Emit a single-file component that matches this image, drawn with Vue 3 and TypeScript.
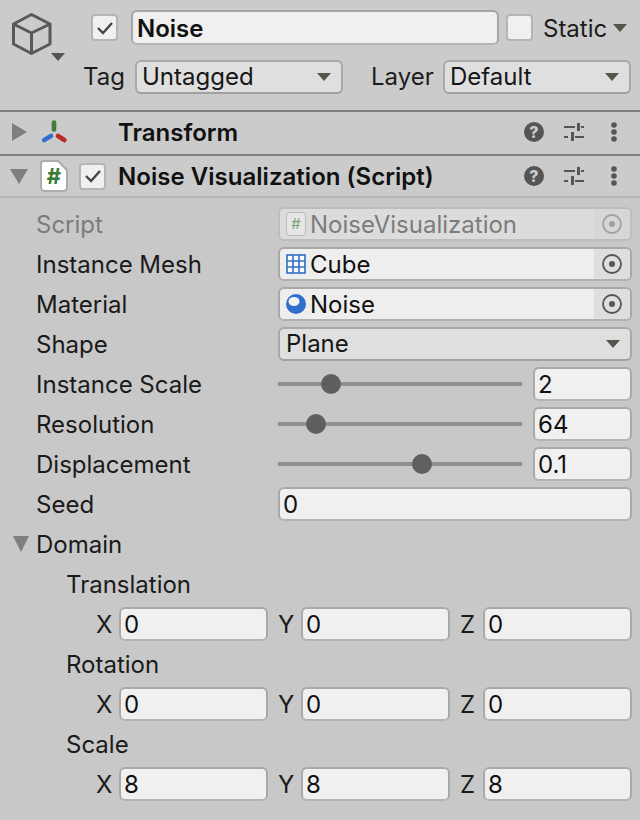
<script setup lang="ts">
const objectFields = [
  { label: "Script", value: "NoiseVisualization", icon: "script", disabled: true },
  { label: "Instance Mesh", value: "Cube", icon: "mesh", disabled: false },
  { label: "Material", value: "Noise", icon: "material", disabled: false },
];

const sliders = [
  { label: "Instance Scale", value: "2", pos: 53 },
  { label: "Resolution", value: "64", pos: 38 },
  { label: "Displacement", value: "0.1", pos: 144 },
];

const vectors = [
  { label: "Translation", values: ["0", "0", "0"] },
  { label: "Rotation", values: ["0", "0", "0"] },
  { label: "Scale", values: ["8", "8", "8"] },
];

const axes = ["X", "Y", "Z"];
</script>

<template>
  <div class="inspector">
    <div class="object-header">
      <div class="object-icon">
        <svg width="40" height="42" viewBox="0 0 40 42" fill="none" stroke="#595959" stroke-width="3" stroke-linejoin="round">
          <path d="M19.5 1.5 L38 11 V31 L19.5 40.5 L1.5 31 V11 Z" />
          <path d="M1.5 11 L19.5 20 L38 11 M19.5 20 V40.5" />
        </svg>
        <span class="arrow-down object-arrow"></span>
      </div>
      <div class="object-rows">
        <div class="name-row">
          <span class="check main-check">
            <svg width="18" height="14" viewBox="0 0 18 14" fill="none" stroke="#444" stroke-width="2.4"><path d="M2 7 L7 12 L16 2" /></svg>
          </span>
          <div class="name-input">Noise</div>
          <span class="check static-check"></span>
          <span class="static-label">Static</span>
          <span class="arrow-down"></span>
        </div>
        <div class="tag-row">
          <span class="tag-label">Tag</span>
          <div class="dropdown tag-drop">Untagged<span class="arrow-down"></span></div>
          <span class="layer-label">Layer</span>
          <div class="dropdown layer-drop">Default<span class="arrow-down"></span></div>
        </div>
      </div>
    </div>

    <div class="comp-header transform">
      <span class="fold-right"></span>
      <svg class="transform-icon" width="28" height="26" viewBox="0 0 28 26" fill="none" stroke-width="4.6" stroke-linecap="round">
        <path d="M14 2.5 V9.5" stroke="#3f7f3a" />
        <path d="M4.2 20 L11 16" stroke="#2f70cc" />
        <path d="M18 16 L24.4 20" stroke="#b82a22" />
      </svg>
      <span class="comp-title">Transform</span>
      <div class="comp-tools">
        <span class="help">?</span>
        <svg class="sliders" width="20" height="20" viewBox="0 0 20 20" fill="none" stroke="#555" stroke-width="2">
          <path d="M0 5 H11 M17 5 H20 M0 15 H4 M11 15 H20" />
          <path d="M14.5 1 V9 M8.5 10 V19" stroke-width="3" />
        </svg>
        <svg class="dots" width="6" height="20" viewBox="0 0 6 20" fill="#555"><circle cx="3" cy="3" r="2.8" /><circle cx="3" cy="10" r="2.8" /><circle cx="3" cy="17" r="2.8" /></svg>
      </div>
    </div>

    <div class="comp-header script-header">
      <span class="fold-down"></span>
      <svg class="script-icon" width="28" height="32" viewBox="0 0 28 32">
        <path d="M4 1 H18 L27 10 V27 Q27 31 23 31 H5 Q1 31 1 27 V4 Q1 1 4 1 Z" fill="#fff" stroke="#acacac" stroke-width="2" />
        <text x="14" y="24" text-anchor="middle" font-size="22" font-weight="700" fill="#3b7a35">#</text>
      </svg>
      <span class="check comp-check">
        <svg width="18" height="14" viewBox="0 0 18 14" fill="none" stroke="#444" stroke-width="2.4"><path d="M2 7 L7 12 L16 2" /></svg>
      </span>
      <span class="comp-title">Noise Visualization (Script)</span>
      <div class="comp-tools">
        <span class="help">?</span>
        <svg class="sliders" width="20" height="20" viewBox="0 0 20 20" fill="none" stroke="#555" stroke-width="2">
          <path d="M0 5 H11 M17 5 H20 M0 15 H4 M11 15 H20" />
          <path d="M14.5 1 V9 M8.5 10 V19" stroke-width="3" />
        </svg>
        <svg class="dots" width="6" height="20" viewBox="0 0 6 20" fill="#555"><circle cx="3" cy="3" r="2.8" /><circle cx="3" cy="10" r="2.8" /><circle cx="3" cy="17" r="2.8" /></svg>
      </div>
    </div>

    <div class="props">
      <div v-for="f in objectFields" :key="f.label" class="row" :class="{ disabled: f.disabled }">
        <span class="label">{{ f.label }}</span>
        <div class="object-field">
          <span class="object-value">
            <span v-if="f.icon === 'script'" class="mini-script">#</span>
            <svg v-else-if="f.icon === 'mesh'" width="20" height="20" viewBox="0 0 20 20" fill="#fff" stroke="#2f6fc4" stroke-width="1.6">
              <rect x="1" y="1" width="18" height="18" />
              <path d="M7 1 V19 M13 1 V19 M1 7 H19 M1 13 H19" />
            </svg>
            <svg v-else width="20" height="20" viewBox="0 0 20 20">
              <circle cx="10" cy="10" r="10" fill="#2f70cc" />
              <ellipse cx="8" cy="7.5" rx="5.5" ry="4.5" fill="#f4f4f4" />
            </svg>
            <span class="value-text">{{ f.value }}</span>
          </span>
          <span class="picker">
            <svg width="20" height="20" viewBox="0 0 20 20" fill="none" :stroke="f.disabled ? '#a0a0a0' : '#555'" stroke-width="1.8">
              <circle cx="10" cy="10" r="9" />
              <circle cx="10" cy="10" r="3" :fill="f.disabled ? '#a0a0a0' : '#555'" stroke="none" />
            </svg>
          </span>
        </div>
      </div>

      <div class="row">
        <span class="label">Shape</span>
        <div class="dropdown shape-drop">Plane<span class="arrow-down"></span></div>
      </div>

      <div v-for="s in sliders" :key="s.label" class="row">
        <span class="label">{{ s.label }}</span>
        <div class="slider">
          <span class="thumb" :style="{ left: s.pos - 10 + 'px' }"></span>
        </div>
        <div class="input num">{{ s.value }}</div>
      </div>

      <div class="row">
        <span class="label">Seed</span>
        <div class="input wide">0</div>
      </div>

      <div class="row domain">
        <span class="fold-down small"></span>
        <span class="label">Domain</span>
      </div>

      <template v-for="v in vectors" :key="v.label">
        <div class="row sub"><span class="label">{{ v.label }}</span></div>
        <div class="row vector">
          <div v-for="(axis, i) in axes" :key="axis" class="axis">
            <span class="axis-label">{{ axis }}</span>
            <div class="input">{{ v.values[i] }}</div>
          </div>
        </div>
      </template>
    </div>
  </div>
</template>

<style scoped>
.inspector {
  width: 640px;
  height: 820px;
  overflow: hidden;
  background: #c8c8c8;
  color: #111;
  font-family: Inter, "Liberation Sans", sans-serif;
  font-size: 24px;
  line-height: 30px;
}

.object-header {
  height: 110px;
  display: flex;
  box-sizing: border-box;
  background: #cbcbcb;
  padding-top: 10px;
}
.object-icon {
  width: 82px;
  flex: none;
  padding: 3px 0 0 12px;
  box-sizing: border-box;
  position: relative;
}
.object-icon svg {
  display: block;
}
.object-arrow {
  position: absolute;
  left: 51px;
  top: 43px;
}
.object-rows {
  flex: 1;
}
.name-row {
  display: flex;
  align-items: center;
  height: 35px;
}
.check {
  width: 27px;
  height: 27px;
  box-sizing: border-box;
  border: 2px solid #b5b5b5;
  border-radius: 4px;
  background: #f0f0f0;
  display: flex;
  align-items: center;
  justify-content: center;
  flex: none;
}
.main-check {
  margin-left: 9px;
}
.name-input {
  width: 368px;
  height: 35px;
  box-sizing: border-box;
  margin-left: 13px;
  border: 2px solid #a6a6a6;
  border-bottom-color: #b4b4b4;
  border-radius: 6px;
  background: #f0f0f0;
  font-weight: 600;
  padding-left: 4px;
  line-height: 33px;
}
.static-check {
  margin-left: 7px;
}
.static-label {
  margin-left: 10px;
  width: 70px;
  padding-top: 2px;
  color: #1c1c1c;
}
.arrow-down {
  width: 0;
  height: 0;
  flex: none;
  border-left: 7px solid transparent;
  border-right: 7px solid transparent;
  border-top: 8px solid #55554d;
}
.tag-row {
  display: flex;
  align-items: center;
  margin-top: 14px;
  height: 35px;
}
.tag-label {
  width: 52px;
  margin-left: 1px;
  color: #1c1c1c;
}
.layer-label {
  margin-left: 28px;
  width: 72px;
  color: #1c1c1c;
}
.dropdown {
  height: 34px;
  box-sizing: border-box;
  display: flex;
  align-items: center;
  justify-content: space-between;
  padding: 0 10px 0 5px;
  border: 2px solid #a9a9a9;
  border-bottom-color: #a0a0a0;
  border-radius: 6px;
  background: #dfdfdf;
  color: #161616;
}
.tag-drop {
  width: 208px;
}
.layer-drop {
  width: 188px;
}

.comp-header {
  display: flex;
  align-items: center;
  position: relative;
  border-top: 2px solid #7f7f7f;
  background: #cbcbcb;
  box-sizing: border-box;
  height: 44px;
}
.script-header {
  border-bottom: 2px solid #b4b4b4;
}
.fold-right {
  width: 0;
  height: 0;
  margin-left: 12px;
  margin-bottom: 2px;
  flex: none;
  border-top: 9px solid transparent;
  border-bottom: 9px solid transparent;
  border-left: 15px solid #7f7f7f;
}
.fold-down {
  width: 0;
  height: 0;
  margin-left: 10px;
  flex: none;
  border-left: 9px solid transparent;
  border-right: 9px solid transparent;
  border-top: 15px solid #7f7f7f;
}
.fold-down.small {
  margin-left: 13px;
  margin-right: 7px;
  border-left-width: 8px;
  border-right-width: 8px;
  border-top-width: 16px;
}
.transform-icon {
  margin-left: 13px;
  flex: none;
}
.comp-title {
  font-weight: 600;
}
.transform .comp-title {
  margin-left: 50px;
}
.script-icon {
  margin-left: 12px;
  flex: none;
}
.comp-check {
  margin-left: 11px;
}
.script-header .comp-title {
  margin-left: 12px;
  padding-top: 2px;
  letter-spacing: 0.03px;
}
.comp-tools {
  position: absolute;
  left: 524px;
  top: 10px;
  display: flex;
  align-items: center;
}
.sliders {
  margin-left: 20px;
}
.dots {
  margin-left: 27px;
}
.help {
  width: 20px;
  height: 20px;
  border-radius: 50%;
  background: #555;
  color: #ccc;
  font-size: 16px;
  font-weight: 800;
  line-height: 20px;
  text-align: center;
}

.props {
  padding-top: 6px;
}
.row {
  height: 40px;
  display: flex;
  align-items: center;
  padding-left: 36px;
  padding-right: 8px;
  box-sizing: border-box;
  color: #1a1a1a;
}
.label {
  width: 242px;
  flex: none;
  padding-top: 2px;
}
.disabled .label {
  color: #7c7c7c;
}
.object-field {
  flex: 1;
  height: 34px;
  box-sizing: border-box;
  display: flex;
  border: 2px solid #a9a9a9;
  border-bottom-color: #b0b0b0;
  border-radius: 6px;
  overflow: hidden;
  background: #eee;
}
.object-value {
  flex: 1;
  display: flex;
  align-items: center;
  gap: 4px;
  padding-left: 6px;
  color: #111;
}
.value-text {
  padding-top: 2px;
}
.picker {
  width: 36px;
  background: #dedede;
  display: flex;
  align-items: center;
  justify-content: center;
}
.disabled .object-field {
  border-color: #bdbdbd;
  background: #dcdcdc;
}
.disabled .object-value {
  color: #7c7c7c;
}
.disabled .picker {
  background: #d6d6d6;
}
.mini-script {
  width: 20px;
  height: 24px;
  box-sizing: border-box;
  border: 1px solid #bbb;
  border-radius: 3px;
  background: #e6e6e6;
  color: #7fa07a;
  font-size: 15px;
  line-height: 22px;
  text-align: center;
}
.shape-drop {
  flex: 1;
  padding-left: 6px;
}
.slider {
  width: 244px;
  height: 4px;
  flex: none;
  background: #8f8f8f;
  position: relative;
}
.thumb {
  position: absolute;
  top: -8px;
  width: 20px;
  height: 20px;
  border-radius: 50%;
  background: #5f5f5f;
}
.input {
  height: 34px;
  box-sizing: border-box;
  border: 2px solid #a9a9a9;
  border-bottom-color: #b4b4b4;
  border-radius: 6px;
  background: #f0f0f0;
  padding-left: 3px;
  line-height: 32px;
  color: #111;
}
.num {
  width: 99px;
  margin-left: 11px;
}
.wide {
  flex: 1;
}
.domain {
  padding-left: 0;
}
.sub {
  padding-left: 66px;
}
.vector {
  padding-left: 96px;
  gap: 10px;
}
.axis {
  width: 172px;
  display: flex;
  align-items: center;
}
.axis-label {
  width: 23px;
  flex: none;
  padding-top: 2px;
}
.axis .input {
  flex: 1;
}
</style>
